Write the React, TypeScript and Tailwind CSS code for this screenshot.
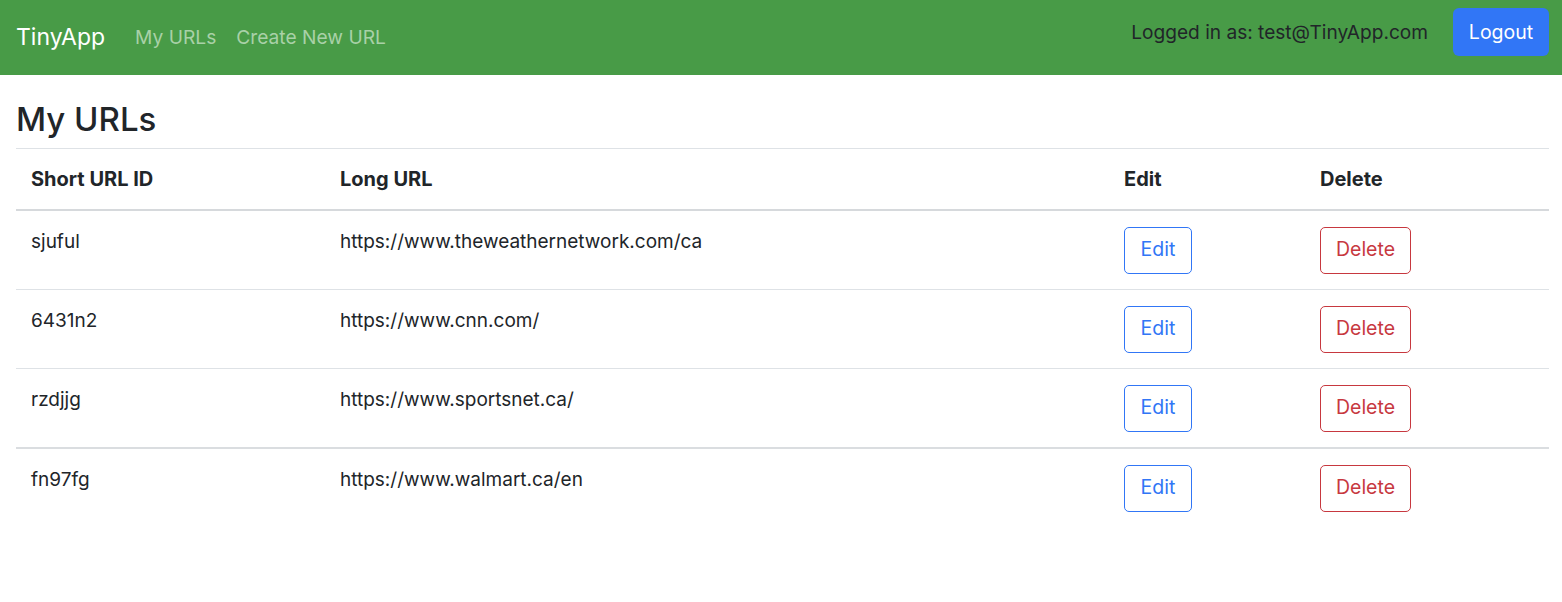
// App.tsx

const urls = [
	{ id: "sjuful", longURL: "https://www.theweathernetwork.com/ca" },
	{ id: "6431n2", longURL: "https://www.cnn.com/" },
	{ id: "rzdjjg", longURL: "https://www.sportsnet.ca/" },
	{ id: "fn97fg", longURL: "https://www.walmart.ca/en" },
];

function Header() {
	return (
		<nav className="h-[75px] bg-[#489b47] flex items-start justify-between px-4">
			<div className="flex items-center h-full">
				<a href="#" className="text-[23px] text-white mr-[30px] leading-none">
					TinyApp
				</a>
				<a href="#" className="text-[19.2px] text-[#a9d1a8] mr-5 leading-none">
					My URLs
				</a>
				<a href="#" className="text-[19.2px] text-[#a9d1a8] leading-none">
					Create New URL
				</a>
			</div>
			<div className="flex items-center pt-2 gap-[25px] mr-[-3px]">
				<span className="text-[19.1px] text-[#212529]">Logged in as: test@TinyApp.com</span>
				<button className="h-[48px] w-[96px] pt-[2px] rounded-[6px] bg-[#3176f6] text-white text-[19.5px]">
					Logout
				</button>
			</div>
		</nav>
	);
}

function UrlsTable() {
	return (
		<table className="w-full text-left text-[19px] text-[#212529] border-t border-[#dee2e6]">
			<thead>
				<tr className="border-b-2 border-[#d6d9dc]">
					<th className="w-[309px] px-[15px] h-[61px] pt-[1px] text-left text-[20px] font-bold">Short URL ID</th>
					<th className="w-[784px] px-[15px] pt-[1px] text-left text-[20px] font-bold">Long URL</th>
					<th className="w-[196px] px-[15px] pt-[1px] text-left text-[20px] font-bold">Edit</th>
					<th className="px-[15px] pt-[1px] text-left text-[20px] font-bold">Delete</th>
				</tr>
			</thead>
			<tbody>
				{urls.map((url, i) => (
					<tr
						key={url.id}
						className={
							i === 3
								? ""
								: i === 2
									? "border-b-2 border-[#dadde0]"
									: "border-b border-[#dee2e6]"
						}
					>
						<td className="px-[15px] pt-4 pb-[14px] align-top leading-[30px]">{url.id}</td>
						<td className="px-[15px] pt-4 pb-[14px] align-top leading-[30px]">{url.longURL}</td>
						<td className="px-[15px] pt-4 pb-[15px] align-top">
							<button className="h-[47px] w-[68px] rounded-[5px] border border-[#3176f6] text-[#3176f6] text-[19.5px]">
								Edit
							</button>
						</td>
						<td className="px-[15px] pt-4 pb-[15px] align-top">
							<button className="h-[47px] w-[91px] rounded-[5px] border border-[#c7383f] text-[#c7383f] text-[19.5px]">
								Delete
							</button>
						</td>
					</tr>
				))}
			</tbody>
		</table>
	);
}

function App() {
	return (
		<div className="min-h-screen bg-white font-['Inter','Liberation_Sans',sans-serif]">
			<Header />
			<main className="pl-4 pr-[13px]">
				<h1 className="text-[33px] font-medium text-[#212529] pt-[22px] pb-[7px] leading-[44px]">
					My URLs
				</h1>
				<UrlsTable />
			</main>
		</div>
	);
}

export default App;
